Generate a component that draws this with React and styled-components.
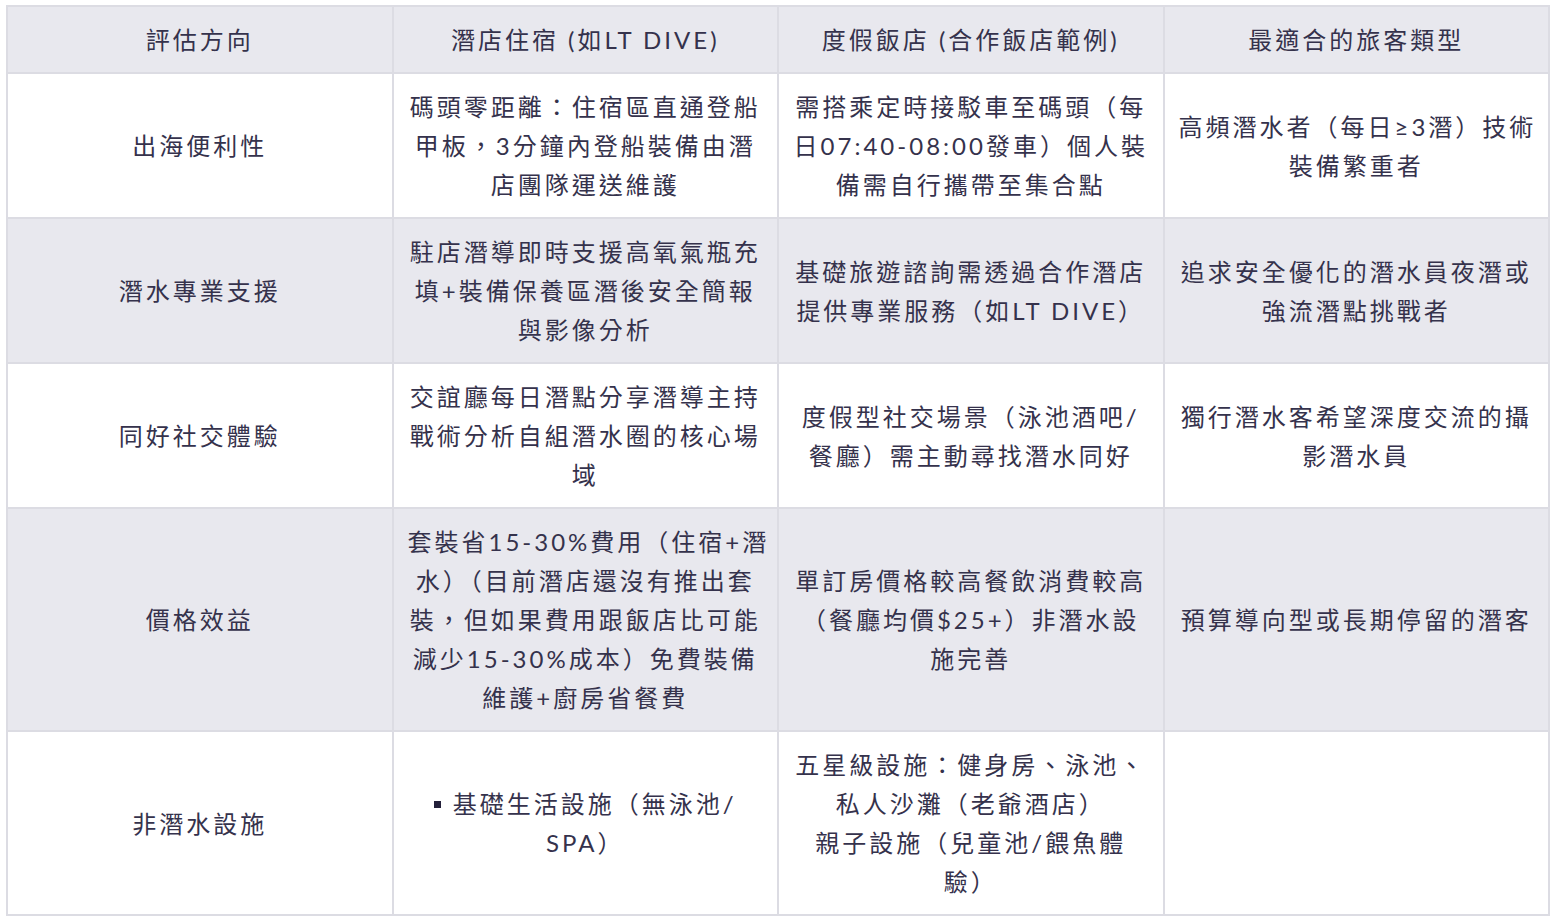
import React from "react";
import styled, { createGlobalStyle } from "styled-components";

const Global = createGlobalStyle`
  html, body { margin: 0; padding: 0; background: #ffffff; }
  body { font-family: Lato, "Noto Sans CJK TC", "Noto Sans CJK SC", sans-serif; }
`;

const Wrap = styled.div`
  padding: 5px 6px 0 6px;
`;

const Table = styled.table`
  width: 100%;
  border-collapse: collapse;
  table-layout: fixed;
  color: #35324c;
  font-family: Lato, "Noto Sans CJK TC", sans-serif;
  font-size: 24px;
  letter-spacing: 3px;
  line-height: 39px;
`;

const Row = styled.tr`
  background: ${(p) => (p.$shaded ? "#e8e8ee" : "#ffffff")};
`;

const Cell = styled.td`
  border: 2px solid #dcdce3;
  padding: 13px 14px;
  text-align: center;
  vertical-align: middle;
`;

const HeadCell = styled(Cell).attrs({ as: "th" })`
  font-weight: 400;
`;

const Line = styled.span`
  display: block;
  white-space: nowrap;
`;

const Bullets = styled.ul`
  margin: 0;
  padding: 0;
  list-style: none;
`;

const Item = styled.li`
  display: block;
`;

const Square = styled.span`
  display: inline-block;
  width: 7px;
  height: 7px;
  background: #23203a;
  margin-right: 12px;
  vertical-align: middle;
  position: relative;
  top: -2px;
`;

const headers = ["評估方向", "潛店住宿 (如LT DIVE)", "度假飯店 (合作飯店範例)", "最適合的旅客類型"];

const rows = [
  [
    ["出海便利性"],
    ["碼頭零距離：住宿區直通登船", "甲板，3分鐘內登船裝備由潛", "店團隊運送維護"],
    ["需搭乘定時接駁車至碼頭（每", "日07:40-08:00發車）個人裝", "備需自行攜帶至集合點"],
    ["高頻潛水者（每日≥3潛）技術", "裝備繁重者"],
  ],
  [
    ["潛水專業支援"],
    ["駐店潛導即時支援高氧氣瓶充", "填+裝備保養區潛後安全簡報", "與影像分析"],
    ["基礎旅遊諮詢需透過合作潛店", "提供專業服務（如LT DIVE）"],
    ["追求安全優化的潛水員夜潛或", "強流潛點挑戰者"],
  ],
  [
    ["同好社交體驗"],
    ["交誼廳每日潛點分享潛導主持", "戰術分析自組潛水圈的核心場", "域"],
    ["度假型社交場景（泳池酒吧/", "餐廳）需主動尋找潛水同好"],
    ["獨行潛水客希望深度交流的攝", "影潛水員"],
  ],
  [
    ["價格效益"],
    [
      "套裝省15-30%費用（住宿+潛",
      "水）（目前潛店還沒有推出套",
      "裝，但如果費用跟飯店比可能",
      "減少15-30%成本）免費裝備",
      "維護+廚房省餐費",
    ],
    ["單訂房價格較高餐飲消費較高", "（餐廳均價$25+）非潛水設", "施完善"],
    ["預算導向型或長期停留的潛客"],
  ],
  [
    ["非潛水設施"],
    "bullet",
    ["五星級設施：健身房、泳池、", "私人沙灘（老爺酒店）", "親子設施（兒童池/餵魚體", "驗）"],
    [],
  ],
];

function CellBody({ value }) {
  if (value === "bullet") {
    return (
      <Bullets>
        <Item>
          <Line>
            <Square />
            基礎生活設施（無泳池/
          </Line>
          <Line>SPA）</Line>
        </Item>
      </Bullets>
    );
  }
  return value.map((l, i) => <Line key={i}>{l}</Line>);
}

export default function App() {
  return (
    <>
      <Global />
      <Wrap>
        <Table>
          <thead>
            <Row $shaded>
              {headers.map((h) => (
                <HeadCell key={h}>{h}</HeadCell>
              ))}
            </Row>
          </thead>
          <tbody>
            {rows.map((r, i) => (
              <Row key={i} $shaded={i % 2 === 1}>
                {r.map((c, j) => (
                  <Cell key={j}>
                    <CellBody value={c} />
                  </Cell>
                ))}
              </Row>
            ))}
          </tbody>
        </Table>
      </Wrap>
    </>
  );
}
